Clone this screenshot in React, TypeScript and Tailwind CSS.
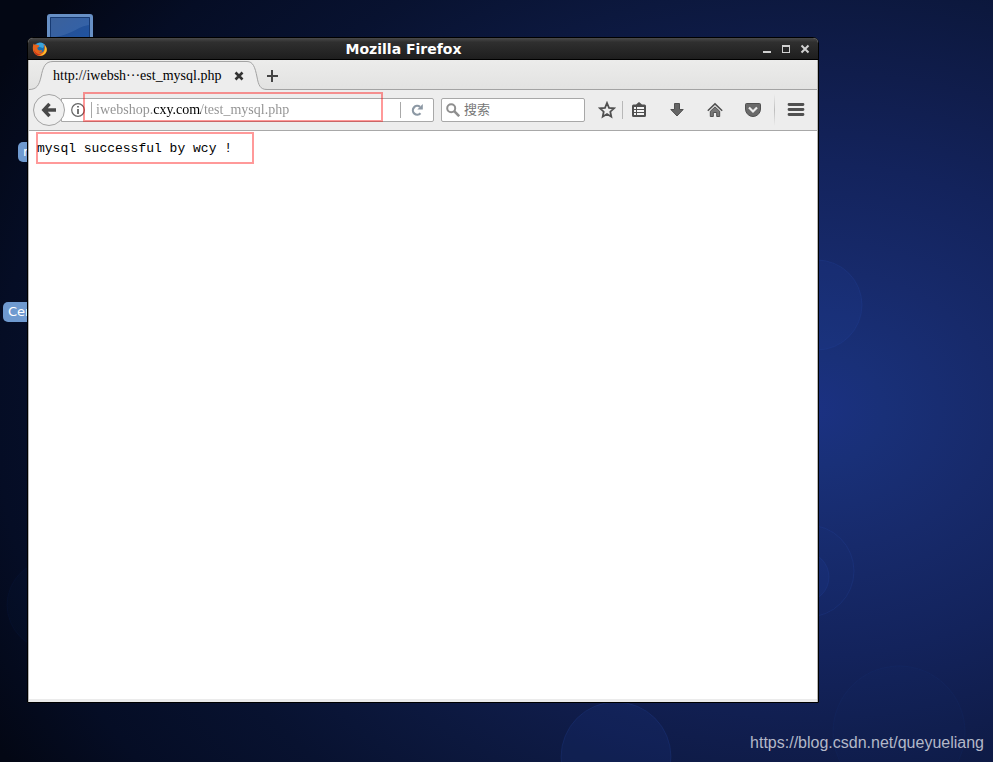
import type { ReactNode } from "react";

const Wallpaper: React.FC = () => {
  return (
    <svg
      className="absolute inset-0 h-full w-full"
      viewBox="0 0 993 762"
      preserveAspectRatio="none"
      aria-hidden="true"
    >
      <defs>
        <radialGradient
          id="glow"
          gradientUnits="userSpaceOnUse"
          cx="0"
          cy="0"
          r="1"
          gradientTransform="translate(810 410) scale(924 704)"
        >
          <stop offset="0" stopColor="#1b3182" />
          <stop offset="0.08" stopColor="#193078" />
          <stop offset="0.2" stopColor="#172a6b" />
          <stop offset="0.35" stopColor="#13235c" />
          <stop offset="0.48" stopColor="#101d4c" />
          <stop offset="0.6" stopColor="#0c183e" />
          <stop offset="0.73" stopColor="#081230" />
          <stop offset="0.88" stopColor="#050d25" />
          <stop offset="1" stopColor="#030714" />
        </radialGradient>
      </defs>
      <rect width="993" height="762" fill="url(#glow)" />
      <g fill="#2040a0" fillOpacity="0.15" stroke="#2a4aa8" strokeOpacity="0.2">
        <circle cx="817" cy="305" r="45" />
        <circle cx="808" cy="571" r="46" fillOpacity="0.06" />
        <circle cx="804" cy="577" r="25" />
        <circle cx="616" cy="757" r="55" />
        <circle cx="899" cy="732" r="66" fillOpacity="0.04" strokeOpacity="0.08" />
        <circle cx="52" cy="605" r="45" fillOpacity="0.04" strokeOpacity="0.06" />
      </g>
    </svg>
  );
};

const FirefoxLogo: React.FC = () => {
  return (
    <svg className="h-4 w-4" viewBox="0 0 16 16" aria-hidden="true">
      <circle cx="8" cy="8" r="6.6" fill="#1b6fae" />
      <path d="M4 3.6C6 1.200 10.500 1 12.800 3.800L11 7 6 5.500Z" fill="#3aa5dc" />
      <path
        d="M1.600 2.600C1.800 3.600 2.400 3.700 3 3.500C4 3.200 5 3.500 5.600 4.100L7.400 4.600L6.700 5.900L5.400 6.700C5.200 8.800 6.900 9.900 8.800 9.300C9.600 9 10.400 9.300 10.100 9.900C9.300 11.300 7.600 11.600 6.300 11.200C9.400 12.600 12.300 10.800 12.400 7.600C12.500 5.800 12 4.400 11.100 3.200C14.600 4.800 16 8.900 13.900 12C11.500 15.900 5.700 16 2.800 12.800C0.200 9.900 0.600 5.600 1.600 2.600Z"
        fill="#e8641b"
      />
      <path
        d="M13 4.400C15.200 7 15.300 10 13.300 12.300C11.500 14.400 8.700 15 6.200 14.200C10 14.300 13.500 11.500 13 4.400Z"
        fill="#fcc32c"
      />
      <path d="M2.200 9C3.400 12 6 13.800 9 13.600C6 15.600 2 13 2.200 9Z" fill="#c8321a" />
    </svg>
  );
};

interface IconButtonProps {
  label: string;
  className?: string;
  children: ReactNode;
}

const IconButton: React.FC<IconButtonProps> = ({ label, className = "w-[38px]", children }) => {
  return (
    <button
      aria-label={label}
      className={`flex h-8 shrink-0 items-center justify-center text-[#505050] ${className}`}
    >
      <svg
        className="h-[18px] w-[18px]"
        viewBox="0 0 18 18"
        fill="none"
        stroke="currentColor"
        strokeWidth="2"
      >
        {children}
      </svg>
    </button>
  );
};

const TitleBar: React.FC = () => {
  return (
    <header className="flex h-[22px] items-center rounded-t-[5px] border-b border-black bg-linear-to-b from-[#4a4a4a] via-[#2f2f2f] via-20% to-[#1e1e1e] pr-[5px] pl-1">
      <FirefoxLogo />
      <h1 className="flex-1 text-center font-['DejaVu_Sans',sans-serif] text-sm leading-5 font-bold text-white">
        Mozilla Firefox
      </h1>
      <div className="flex gap-[3px] text-[#d0d0d0]">
        <button aria-label="Minimize" className="h-4 w-4">
          <svg viewBox="0 0 16 16" fill="currentColor">
            <path d="M4 10h8v2H4z" />
          </svg>
        </button>
        <button aria-label="Maximize" className="h-4 w-4">
          <svg viewBox="0 0 16 16" fill="currentColor" fillRule="evenodd">
            <path d="M4 4h8v8H4zM5 6v5h6V6z" />
          </svg>
        </button>
        <button aria-label="Close window" className="h-4 w-4">
          <svg viewBox="0 0 16 16" fill="none" stroke="currentColor" strokeWidth="2">
            <path d="M4.500 4.500l7 7m0-7l-7 7" />
          </svg>
        </button>
      </div>
    </header>
  );
};

const TabStrip: React.FC = () => {
  return (
    <div className="flex h-[30px] items-end bg-linear-to-b from-[#ececeb] to-[#e2e2e1] shadow-[inset_0_-1px_#a3a3a3]">
      <div className="flex h-[29px]">
        <svg className="h-[29px] w-6" viewBox="0 0 24 29" aria-hidden="true">
          <path
            d="M0 28.500C8 28.500 10 24 12 16C14 6 16 0.500 24 0.500V29H0Z"
            fill="#ededed"
          />
          <path
            d="M0 28.500C8 28.500 10 24 12 16C14 6 16 0.500 24 0.500"
            fill="none"
            stroke="#a3a3a3"
          />
        </svg>
        <div className="flex w-[194px] items-center justify-between border-t border-[#a3a3a3] bg-[#ededed]">
          <span className="font-['Liberation_Serif',serif] text-sm leading-4 whitespace-nowrap text-black">
            http://iwebsh···est_mysql.php
          </span>
          <button aria-label="Close tab" className="h-4 w-4">
            <svg viewBox="0 0 16 16" fill="none" stroke="#333" strokeWidth="2.600">
              <path d="M4.500 4.500l7 7m0-7l-7 7" />
            </svg>
          </button>
        </div>
        <svg className="h-[29px] w-5" viewBox="0 0 20 29" aria-hidden="true">
          <path
            d="M0 0.500C6 0.500 8 6 10 16C11.500 24 13 28.500 20 28.500V29H0Z"
            fill="#ededed"
          />
          <path
            d="M0 0.500C6 0.500 8 6 10 16C11.500 24 13 28.500 20 28.500"
            fill="none"
            stroke="#a3a3a3"
          />
        </svg>
      </div>
      <button aria-label="New tab" className="flex h-[29px] w-3 items-center">
        <svg className="h-3 w-3" viewBox="0 0 12 12" stroke="#444" strokeWidth="2">
          <path d="M5 0v12M-1 6h12" />
        </svg>
      </button>
    </div>
  );
};

const NavBar: React.FC = () => {
  return (
    <nav className="relative flex h-[41px] items-center border-b border-[#a8a8a8] bg-[#ededed] pl-1">
      <button
        aria-label="Back"
        className="z-10 flex h-8 w-8 shrink-0 items-center justify-center rounded-full border border-[#a3a3a3] bg-[#f0f0f0]"
      >
        <svg className="h-4 w-4" viewBox="0 0 16 16" fill="none" stroke="#484848" strokeWidth="3.400">
          <path d="M8.500 1.800L2.800 8l5.700 6.200M3 8h12" />
        </svg>
      </button>
      <div className="-ml-1 flex h-6 min-w-0 flex-1 items-center rounded-r-xs border border-[#a8a8a8] bg-white pl-[9px]">
        <button aria-label="Site information" className="h-[14px] w-[14px] shrink-0">
          <svg viewBox="0 0 14 14" fill="none" stroke="#666">
            <circle cx="7" cy="7" r="6.300" strokeWidth="1.200" />
            <path d="M7 6v5M7 3v1.600" strokeWidth="1.800" />
          </svg>
        </button>
        <span className="ml-1.5 h-4 w-px bg-[#a8a8a8]" />
        {/* the domain part of the address is darker than the rest */}
        <input
          aria-label="Address"
          defaultValue="iwebshop.cxy.com/test_mysql.php"
          className="ml-1 h-5 min-w-0 flex-1 bg-[linear-gradient(90deg,#909090_57px,#000_57px,#000_105px,#909090_105px)] bg-clip-text font-['Liberation_Serif',serif] text-sm leading-4 text-transparent outline-none"
        />
        <span className="h-4 w-px bg-[#a8a8a8]" />
        <button aria-label="Reload" className="flex h-5 w-8 items-center justify-center">
          <svg className="h-3 w-3" viewBox="0 0 12 12" aria-hidden="true">
            <path
              d="M9 2.800A4.400 4.400 0 1 0 9.500 9.300"
              fill="none"
              stroke="#8c98a4"
              strokeWidth="2.200"
            />
            <path d="M11.800 0v5.500H6.300z" fill="#8c98a4" />
          </svg>
        </button>
      </div>
      <label className="ml-[7px] flex h-6 w-36 shrink-0 items-center gap-1 rounded-xs border border-[#a8a8a8] bg-white pl-1">
        <svg className="h-[14px] w-[14px] shrink-0" viewBox="0 0 14 14" fill="none" stroke="#8f8f8f">
          <circle cx="5.200" cy="5.200" r="4" strokeWidth="2" />
          <path d="M8.200 8.200l5 5" strokeWidth="2.600" />
        </svg>
        <input
          aria-label="搜索"
          placeholder="搜索"
          className="h-5 w-full min-w-0 font-['Liberation_Sans','Noto_Sans_CJK_SC',sans-serif] text-[13px] leading-5 outline-none placeholder:text-[#777]"
        />
      </label>
      <div className="ml-[7px] flex shrink-0 items-center">
        <IconButton label="Bookmark this page" className="w-[30px]">
          <path
            d="M9 2l2 4.800 5 .5-3.700 3.400 1 5L9 13.100l-4.300 2.600 1-5L2 7.300l5-.5z"
            strokeWidth="1.800"
          />
        </IconButton>
        <span className="h-[18px] w-px bg-[#b8b8b8]" />
        <IconButton label="Bookmarks" className="w-[31px]">
          <path
            d="M3.500 3.500H6L9 1l3 2.500h2.500A1.500 1.500 0 0 1 16 5v9.500a1.500 1.500 0 0 1-1.500 1.500h-11A1.500 1.500 0 0 1 2 14.500V5a1.500 1.500 0 0 1 1.500-1.500z"
            fill="currentColor"
            stroke="none"
          />
          <path
            d="M4 6h2v2H4zM7 6h7v2H7zM4 9h2v2H4zM7 9h7v2H7zM4 12h2v2H4zM7 12h7v2H7z"
            fill="#f4f4f4"
            stroke="none"
          />
        </IconButton>
        <IconButton label="Downloads" className="ml-1 w-[38px]">
          <path
            d="M6.500 2.500h5v6h3.700L9 15 2.800 8.500h3.700z"
            fill="#666"
            strokeWidth="1"
            strokeLinejoin="round"
          />
        </IconButton>
        <IconButton label="Home">
          <path d="M1.800 9.800L9 2.900l7.200 6.900" strokeWidth="1.500" />
          <path d="M4.300 10.300L9 5.900l4.700 4.400v5.200h-3v-4H7.300v4h-3z" fill="#777" strokeWidth="1" />
        </IconButton>
        <IconButton label="Save to Pocket">
          <path
            d="M2.500 2.500h13a1 1 0 0 1 1 1V8a7.500 7.500 0 0 1-15 0V3.500a1 1 0 0 1 1-1z"
            fill="#6a6a6a"
            strokeWidth="1"
          />
          <path d="M5 6.500l4 4 4-4" stroke="#ededed" strokeWidth="2.200" />
        </IconButton>
        <span className="ml-0.5 h-8 w-px bg-linear-to-b from-transparent via-[#bdbdbd] to-transparent" />
        <IconButton label="Open menu" className="w-[42px]">
          <path d="M2 3.500h14M2 8.500h14M2 13.500h14" strokeWidth="2.800" strokeLinecap="round" />
        </IconButton>
      </div>
      <span className="pointer-events-none absolute top-0.5 left-[54px] z-20 h-[30px] w-[300px] border-2 border-[#ff0000]/40" />
    </nav>
  );
};

const App: React.FC = () => {
  return (
    <div className="relative flex min-h-screen flex-col overflow-hidden bg-[#061030]">
      <Wallpaper />

      {/* desktop icons, mostly hidden behind the window */}
      <div className="absolute top-3.5 left-[47px] h-10 w-[46px] rounded-[3px] border-[3px] border-[#6790c6] bg-linear-to-br from-[#2a4f8c] to-[#1c54a6]">
        <svg className="h-full w-full" viewBox="0 0 40 34" preserveAspectRatio="none" aria-hidden="true">
          <path d="M0 0h40v8C27 9 24 18 0 21z" fill="#7ba6d8" fillOpacity="0.2" />
          <path d="M0.500 34V0.500h39V34" fill="none" stroke="#173a72" />
        </svg>
      </div>
      <span className="absolute top-[142px] left-[18px] h-5 rounded-[5px] bg-[#6f9ad0] px-[5px] font-['DejaVu_Sans',sans-serif] text-[13px] leading-5 text-white">
        r
      </span>
      <span className="absolute top-[302px] left-[3px] h-5 rounded-[5px] bg-[#6f9ad0] px-[5px] font-['DejaVu_Sans',sans-serif] text-[13px] leading-5 text-white">
        Cen
      </span>

      <section className="relative mt-[37px] mr-[174px] mb-[59px] ml-[27px] flex flex-1 flex-col rounded-t-md border border-black bg-[#ebebeb]">
        <TitleBar />
        <div className="flex flex-1 flex-col border-x border-[#b5b5b5] pb-[3px]">
          <TabStrip />
          <NavBar />
          <main className="relative flex-1 bg-white px-2 py-2">
            <p className="font-['Liberation_Mono',monospace] text-[13px] leading-5 text-black">
              mysql successful by wcy !
            </p>
            <span className="pointer-events-none absolute top-px left-[7px] h-8 w-[218px] border-2 border-[#ff0000]/40" />
          </main>
        </div>
      </section>

      <a
        href="https://blog.csdn.net/queyueliang"
        className="absolute right-[9px] bottom-[7px] font-['Liberation_Sans',sans-serif] text-base leading-6 text-[#b3b8c8]"
      >
        https://blog.csdn.net/queyueliang
      </a>
    </div>
  );
};
export default App;
